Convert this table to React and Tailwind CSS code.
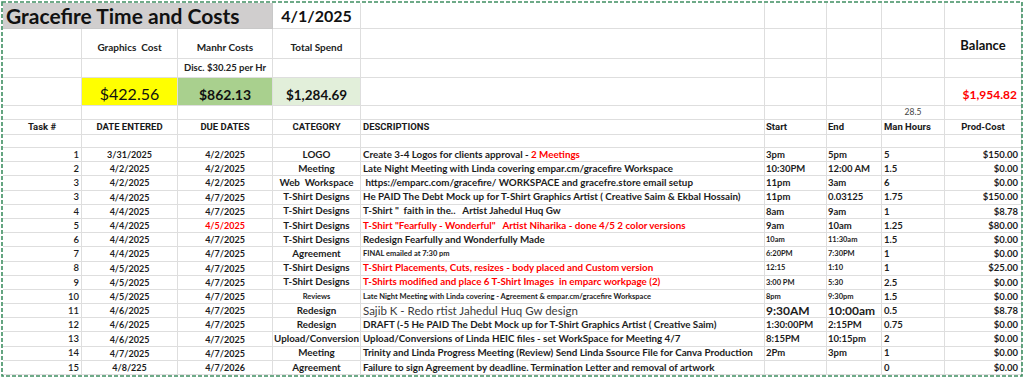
import React from 'react';

const cols = 'grid grid-cols-[79px_96px_95px_88px_404px_62px_55px_63px_77px]';
const cell = 'border-r border-b border-[#dedede] flex items-center overflow-visible whitespace-pre';

const red = 'text-[#ff0000]';

const rows = [
  { n: '1', entered: '3/31/2025', due: '4/2/2025', cat: 'LOGO', desc: <>Create 3-4 Logos for clients approval - <span className={red}>2 Meetings</span></>, start: '3pm', end: '5pm', hrs: '5', cost: '$150.00' },
  { n: '2', entered: '4/2/2025', due: '4/2/2025', cat: 'Meeting', desc: 'Late Night Meeting with Linda covering empar.cm/gracefire Workspace', start: '10:30PM', end: '12:00 AM', hrs: '1.5', cost: '$0.00' },
  { n: '3', entered: '4/2/2025', due: '4/2/2025', cat: 'Web  Workspace', desc: ' https://emparc.com/gracefire/ WORKSPACE and gracefre.store email setup', start: '11pm', end: '3am', hrs: '6', cost: '$0.00' },
  { n: '3', entered: '4/4/2025', due: '4/7/2025', cat: 'T-Shirt Designs', desc: 'He PAID The Debt Mock up for T-Shirt Graphics Artist ( Creative Saim & Ekbal Hossain)', start: '11pm', end: '0.03125', hrs: '1.75', cost: '$150.00' },
  { n: '4', entered: '4/4/2025', due: '4/7/2025', cat: 'T-Shirt Designs', desc: 'T-Shirt "  faith in the..   Artist Jahedul Huq Gw', start: '8am', end: '9am', hrs: '1', cost: '$8.78' },
  { n: '5', entered: '4/4/2025', due: '4/5/2025', dueRed: true, cat: 'T-Shirt Designs', desc: <span className={red}>T-Shirt "Fearfully - Wonderful"   Artist Niharika - done 4/5 2 color versions</span>, start: '9am', end: '10am', hrs: '1.25', cost: '$80.00' },
  { n: '6', entered: '4/4/2025', due: '4/7/2025', cat: 'T-Shirt Designs', desc: 'Redesign Fearfully and Wonderfully Made', start: '10am', end: '11:30am', timeSize: 'small', hrs: '1.5', cost: '$0.00' },
  { n: '7', entered: '4/4/2025', due: '4/7/2025', cat: 'Agreement', desc: 'FINAL emailed at 7:30 pm', descSize: 'small', start: '6:20PM', end: '7:30PM', timeSize: 'small', hrs: '1', cost: '$0.00' },
  { n: '8', entered: '4/5/2025', due: '4/7/2025', cat: 'T-Shirt Designs', desc: <span className={red}>T-Shirt Placements, Cuts, resizes - body placed and Custom version</span>, start: '12:15', end: '1:10', timeSize: 'small', hrs: '1', cost: '$25.00' },
  { n: '9', entered: '4/5/2025', due: '4/7/2025', cat: 'T-Shirt Designs', desc: <span className={red}>T-Shirts modified and place 6 T-Shirt Images  in emparc workpage (2)</span>, start: '3:00 PM', end: '5:30', timeSize: 'small', hrs: '2.5', cost: '$0.00' },
  { n: '10', entered: '4/5/2025', due: '4/7/2025', cat: 'Reviews', catSmall: true, desc: 'Late Night Meeting with Linda covering - Agreement & empar.cm/gracefire Workspace', descSize: 'small', start: '8pm', end: '9:30pm', timeSize: 'small', hrs: '1.5', cost: '$0.00' },
  { n: '11', entered: '4/6/2025', due: '4/7/2025', cat: 'Redesign', desc: 'Sajib K - Redo rtist Jahedul Huq Gw design', descSize: 'large', start: '9:30AM', end: '10:00am', timeSize: 'large', hrs: '0.5', cost: '$8.78' },
  { n: '12', entered: '4/6/2025', due: '4/7/2025', cat: 'Redesign', desc: 'DRAFT (-5 He PAID The Debt Mock up for T-Shirt Graphics Artist ( Creative Saim)', start: '1:30:00PM', end: '2:15PM', hrs: '0.75', cost: '$0.00' },
  { n: '13', entered: '4/6/2025', due: '4/7/2025', cat: 'Upload/Conversion', desc: 'Upload/Conversions of Linda HEIC files - set WorkSpace for Meeting 4/7', start: '8:15PM', end: '10:15pm', hrs: '2', cost: '$0.00' },
  { n: '14', entered: '4/7/2025', due: '4/7/2025', cat: 'Meeting', desc: 'Trinity and Linda Progress Meeting (Review) Send Linda Ssource File for Canva Production', start: '2Pm', end: '3pm', hrs: '1', cost: '$0.00' },
  { n: '15', entered: '4/8/225', due: '4/7/2026', cat: 'Agreement', desc: 'Failure to sign Agreement by deadline. Termination Letter and removal of artwork', start: '', end: '', hrs: '0', cost: '$0.00' },
];

const descClass = (size) =>
  size === 'small' ? 'text-[7.5px] font-bold' : size === 'large' ? 'text-[11.5px] font-normal text-[#3a3a3a]' : 'text-[9.8px] font-bold';

const timeClass = (size) =>
  size === 'small' ? 'text-[7.5px] font-bold' : size === 'large' ? 'text-[12px] font-bold' : 'text-[9.5px] font-bold';

const DataRow = ({ r }) => (
  <div className={`${cols} h-[14.2px] text-[#1c1c1c]`}>
    <div className={`${cell} justify-end pr-[2px] text-[9.5px] font-semibold`}>{r.n}</div>
    <div className={`${cell} justify-center text-[9px] font-bold`}>{r.entered}</div>
    <div className={`${cell} justify-center text-[9px] font-bold ${r.dueRed ? red : ''}`}>{r.due}</div>
    <div className={`${cell} justify-center font-bold ${r.catSmall ? 'text-[7.5px]' : 'text-[9.8px]'}`}>{r.cat}</div>
    <div className={`${cell} pl-[2px] ${descClass(r.descSize)}`}>{r.desc}</div>
    <div className={`${cell} pl-[1px] ${timeClass(r.timeSize)}`}>{r.start}</div>
    <div className={`${cell} pl-[1px] ${timeClass(r.timeSize)}`}>{r.end}</div>
    <div className={`${cell} pl-[2px] text-[9.5px] font-bold`}>{r.hrs}</div>
    <div className={`${cell} justify-end pr-[3px] text-[9.5px] font-bold`}>{r.cost}</div>
  </div>
);

const Empty = ({ n = 9 }) =>
  Array.from({ length: n }).map((_, i) => <div key={i} className={cell} />);

export default function App() {
  return (
    <div className="relative w-[1024px] h-[378px] bg-white overflow-hidden pl-[3px] pt-[3px] font-['Lato',sans-serif] leading-none">
      {/* title row */}
      <div className={`${cols} h-[26px]`}>
        <div className="col-span-3 bg-[#d0cece] border-b border-r border-[#c8c8c8] flex items-center pl-[3px] text-[21px] font-bold text-[#111]">
          Gracefire Time and Costs
        </div>
        <div className={`${cell} justify-center text-[16px] font-bold text-[#111]`}>4/1/2025</div>
        <Empty n={5} />
      </div>

      {/* summary headings */}
      <div className={`${cols} h-[30px]`}>
        <div className={cell} />
        <div className={`${cell} !items-end justify-center pb-[6px] text-[10px] font-bold text-[#222]`}>Graphics  Cost</div>
        <div className={`${cell} !items-end justify-center pb-[6px] text-[10px] font-bold text-[#222]`}>Manhr Costs</div>
        <div className={`${cell} !items-end justify-center pb-[6px] text-[10px] font-bold text-[#222]`}>Total Spend</div>
        <Empty n={4} />
        <div className={`${cell} !items-end justify-center pb-[6px] text-[13px] font-bold text-[#111]`}>Balance</div>
      </div>

      <div className={`${cols} h-[19px]`}>
        <div className={cell} />
        <div className={cell} />
        <div className={`${cell} justify-center text-[9.5px] font-bold text-[#222]`}>Disc. $30.25 per Hr</div>
        <Empty n={6} />
      </div>

      {/* totals */}
      <div className={`${cols} h-[28px]`}>
        <div className={cell} />
        <div className={`${cell} !items-end justify-center pb-[3px] bg-[#ffff00] text-[16px] text-[#111]`}>$422.56</div>
        <div className={`${cell} !items-end justify-center pb-[3px] bg-[#a9d08e] text-[14px] font-bold text-[#111]`}>$862.13</div>
        <div className={`${cell} !items-end justify-center pb-[3px] bg-[#e2efda] text-[13.5px] font-bold text-[#111]`}>$1,284.69</div>
        <Empty n={4} />
        <div className={`${cell} !items-end justify-end pr-[4px] pb-[4px] text-[12px] font-bold ${red}`}>$1,954.82</div>
      </div>

      <div className={`${cols} h-[14px]`}>
        <Empty n={7} />
        <div className={`${cell} justify-center text-[8.5px] text-[#444]`}>28.5</div>
        <div className={cell} />
      </div>

      {/* column headings */}
      <div className={`${cols} h-[15px] font-['Roboto',sans-serif] text-[9.5px] font-bold text-[#1a1a1a]`}>
        <div className={`${cell} justify-center`}>Task #</div>
        <div className={`${cell} justify-center`}>DATE ENTERED</div>
        <div className={`${cell} justify-center`}>DUE DATES</div>
        <div className={`${cell} justify-center`}>CATEGORY</div>
        <div className={`${cell} pl-[2px]`}>DESCRIPTIONS</div>
        <div className={`${cell} pl-[1px]`}>Start</div>
        <div className={`${cell} pl-[1px]`}>End</div>
        <div className={`${cell} pl-[2px]`}>Man Hours</div>
        <div className={`${cell} justify-center`}>Prod-Cost</div>
      </div>

      <div className={`${cols} h-[13px]`}>
        <Empty />
      </div>

      {rows.map((r, i) => (
        <DataRow key={i} r={r} />
      ))}

      {/* copy-selection marquee */}
      <svg className="absolute left-0 top-0 pointer-events-none" width="1024" height="378">
        <rect x="2" y="2" width="1020" height="374" fill="none" stroke="#3f8f62" strokeWidth="1.6" strokeDasharray="4 2" />
      </svg>
    </div>
  );
}
